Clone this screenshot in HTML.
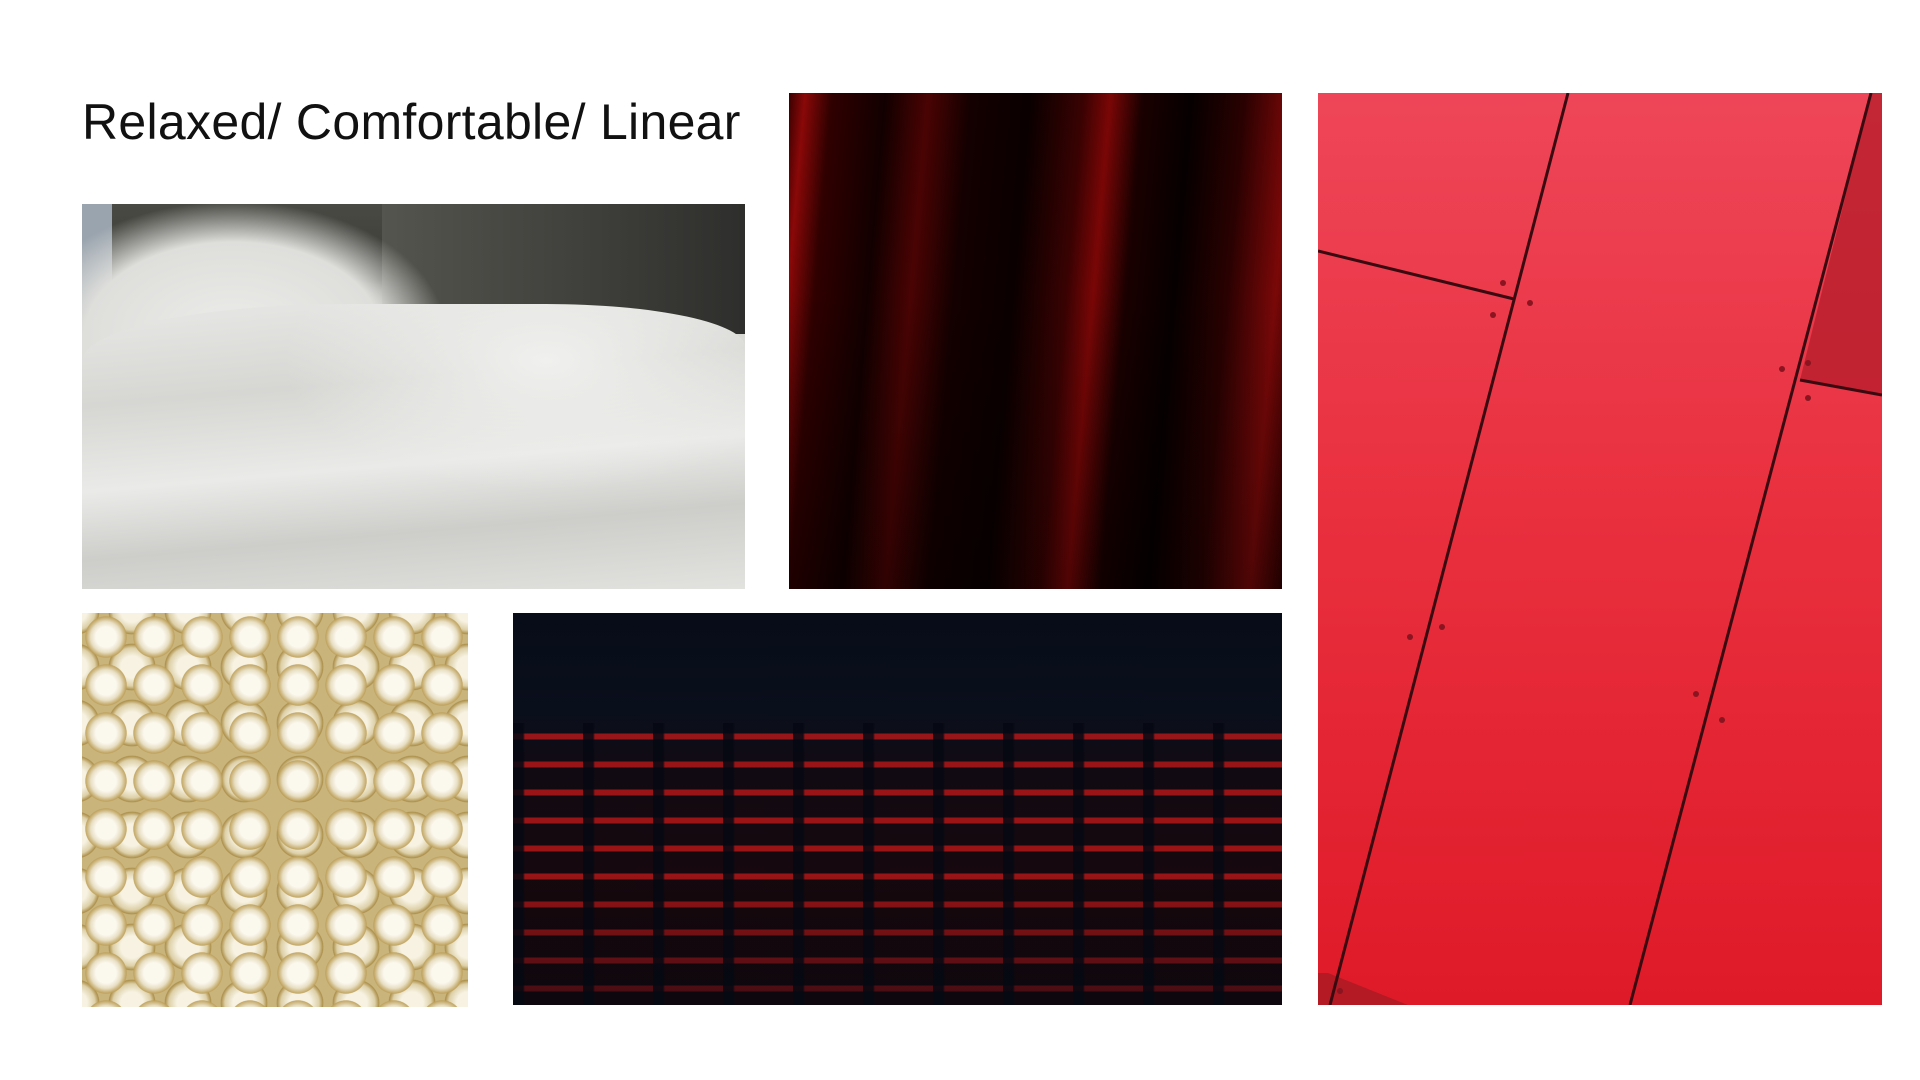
<!DOCTYPE html>
<html><head><meta charset="utf-8"><style>
html,body{margin:0;padding:0;background:#fff;width:1920px;height:1080px;overflow:hidden;position:relative;font-family:"Liberation Sans",sans-serif}
.a{position:absolute;overflow:hidden}
h1{position:absolute;left:82px;top:94px;margin:0;font-weight:400;font-size:50px;line-height:56px;color:#111;letter-spacing:0.3px}
</style></head><body>
<h1>Relaxed/ Comfortable/ Linear</h1>

<div class="a" style="left:82px;top:204px;width:663px;height:385px;background:linear-gradient(180deg,#4a4a44 0%,#3a3a36 20%,#d8d8d4 34%,#e6e6e2 50%,#d4d4d0 70%,#e4e4e0 85%,#cfcfcb 100%)">
<div class="a" style="left:0;top:0;width:30px;height:110px;background:#9aa4ae"></div>
<div class="a" style="left:300px;top:0;width:363px;height:130px;background:linear-gradient(90deg,#55554f,#2e2e2c)"></div>
<div class="a" style="left:-20px;top:0;width:380px;height:200px;background:radial-gradient(ellipse at 45% 65%,#ececea 0%,#dededb 50%,rgba(220,220,218,0) 72%)"></div>
<div class="a" style="left:0;top:100px;width:663px;height:285px;background:radial-gradient(ellipse at 70% 20%,#f0f0ee 0%,rgba(230,230,228,0) 40%),linear-gradient(175deg,#e8e8e6 0%,#d6d6d3 30%,#eaeae8 55%,#cdcdca 75%,#e2e2df 100%);border-radius:40% 30% 0 0/20% 15% 0 0"></div>
</div>

<div class="a" style="left:789px;top:93px;width:493px;height:496px;background:linear-gradient(95deg,#3a0000 0%,#8a0808 3%,#300000 8%,#120000 18%,#4a0303 26%,#140000 34%,#0a0000 45%,#3a0202 55%,#7a0606 60%,#1a0000 66%,#060000 75%,#2a0101 85%,#7a0808 94%,#300000 100%)">
<div class="a" style="left:0;top:0;width:493px;height:496px;background:linear-gradient(180deg,rgba(0,0,0,0) 40%,rgba(0,0,0,0.35) 100%)"></div>
</div>

<div class="a" style="left:1318px;top:93px;width:564px;height:912px;background:linear-gradient(180deg,#ee4658 0%,#e9303f 45%,#df1a28 100%)">
<svg width="564" height="912" style="position:absolute;left:0;top:0">
<polygon points="553,0 564,0 564,302 482,287" fill="#b81e2c" opacity="0.8"/>
<polygon points="0,880 10,880 90,912 0,912" fill="#b31a24"/>
<g stroke="#3a0a10" stroke-width="3" fill="none">
<line x1="250" y1="0" x2="12" y2="912"/>
<line x1="553" y1="0" x2="312" y2="912"/>
<line x1="0" y1="158" x2="196" y2="206"/>
<line x1="482" y1="287" x2="564" y2="302"/>
</g>
<g fill="#8a1420"><circle cx="185" cy="190" r="3"/><circle cx="212" cy="210" r="3"/><circle cx="175" cy="222" r="3"/><circle cx="464" cy="276" r="3"/><circle cx="490" cy="270" r="3"/><circle cx="490" cy="305" r="3"/><circle cx="92" cy="544" r="3"/><circle cx="124" cy="534" r="3"/><circle cx="378" cy="601" r="3"/><circle cx="404" cy="627" r="3"/><circle cx="22" cy="898" r="3"/></g>
</svg>
</div>

<div class="a" style="left:82px;top:613px;width:386px;height:394px;background:
radial-gradient(circle at 50% 50%,#fbf8ee 0 30%,#e8dfc4 45%,rgba(190,160,90,0.9) 60%,transparent 62%) 0 0/48px 48px,
radial-gradient(circle at 50% 50%,#f7f2e2 0 28%,#ddd0a8 48%,rgba(170,140,70,0.9) 58%,transparent 60%) 22px 26px/56px 56px,
#c9b47c"></div>

<div class="a" style="left:513px;top:613px;width:769px;height:392px;background:linear-gradient(180deg,#070c18 0%,#0a0f1c 25%,#120a12 40%,#1a0608 100%)">
<div class="a" style="left:0;top:110px;width:769px;height:282px;background:repeating-linear-gradient(90deg,rgba(5,8,18,0.85) 0 10px,rgba(0,0,0,0) 12px 70px),repeating-linear-gradient(180deg,rgba(0,0,0,0) 0 10px,rgba(210,25,25,0.7) 11px 16px,rgba(0,0,0,0) 17px 28px)"></div>
<div class="a" style="left:0;top:260px;width:769px;height:132px;background:linear-gradient(180deg,rgba(5,8,18,0) 0%,rgba(5,8,18,0.6) 100%)"></div>
</div>
</body></html>
